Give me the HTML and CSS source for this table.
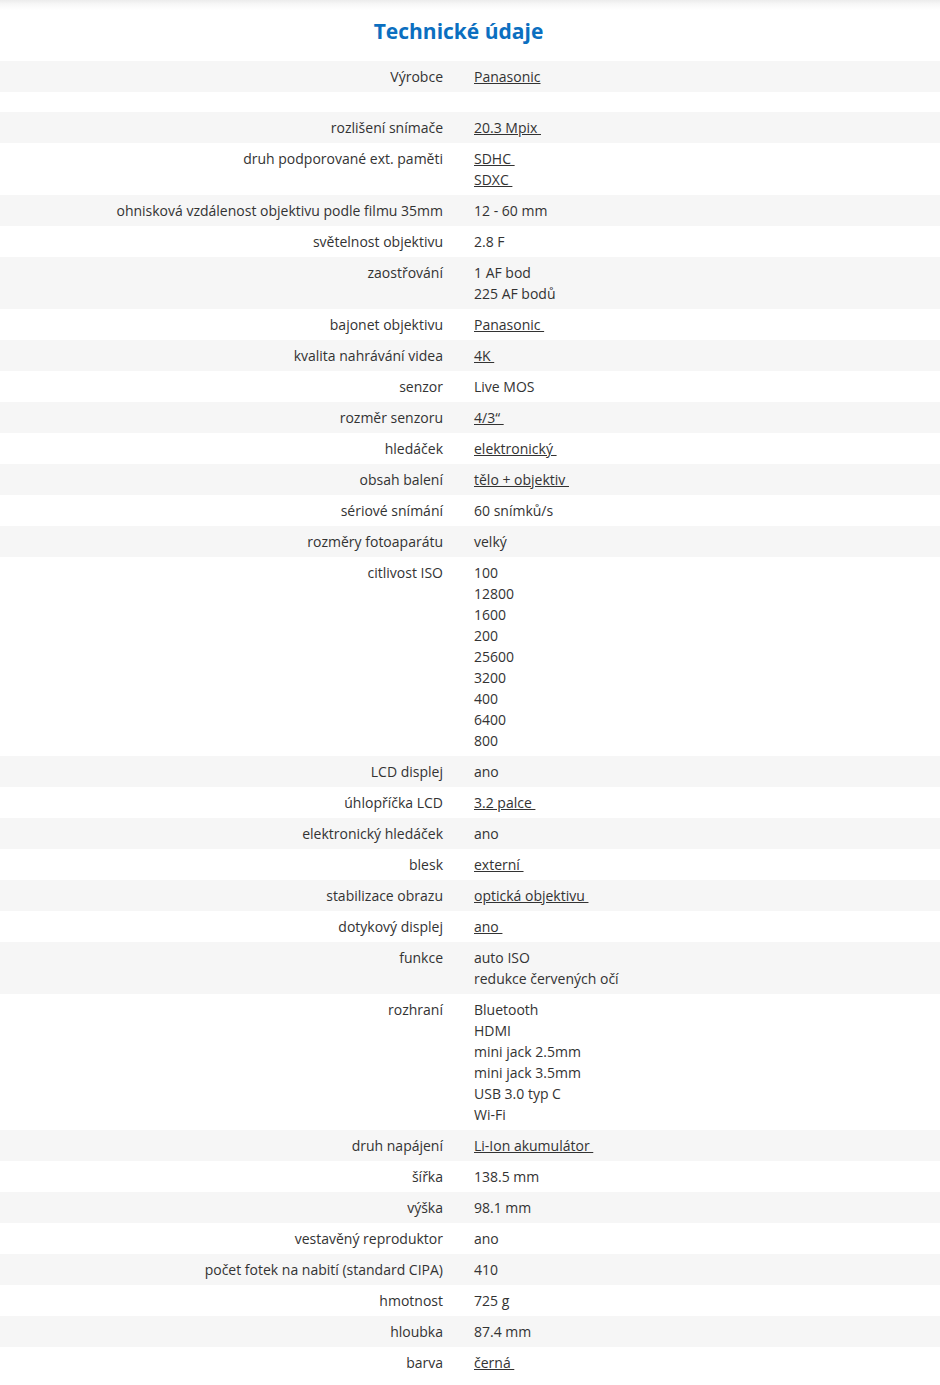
FILE: index.html
```html
<!DOCTYPE html>
<html lang="cs">
<head>
<meta charset="utf-8">
<title>Technické údaje</title>
<link rel="stylesheet" href="styles.css">
</head>
<body>
<div class="topshade"></div>
<section class="specs">
  <h2 class="specs-title">Technické údaje</h2>
  <div class="spec-table">
    <div class="row odd"><div class="lbl">Výrobce</div><div class="val"><a href="#">Panasonic</a></div></div>
    <div class="row spacer"></div>
    <div class="row odd"><div class="lbl">rozlišení snímače</div><div class="val"><a href="#">20.3 Mpix </a></div></div>
    <div class="row"><div class="lbl">druh podporované ext. paměti</div><div class="val"><a href="#">SDHC </a><br><a href="#">SDXC </a></div></div>
    <div class="row odd"><div class="lbl">ohnisková vzdálenost objektivu podle filmu 35mm</div><div class="val">12 - 60 mm</div></div>
    <div class="row"><div class="lbl">světelnost objektivu</div><div class="val">2.8 F</div></div>
    <div class="row odd"><div class="lbl">zaostřování</div><div class="val">1 AF bod<br>225 AF bodů</div></div>
    <div class="row"><div class="lbl">bajonet objektivu</div><div class="val"><a href="#">Panasonic </a></div></div>
    <div class="row odd"><div class="lbl">kvalita nahrávání videa</div><div class="val"><a href="#">4K </a></div></div>
    <div class="row"><div class="lbl">senzor</div><div class="val">Live MOS</div></div>
    <div class="row odd"><div class="lbl">rozměr senzoru</div><div class="val"><a href="#">4/3“ </a></div></div>
    <div class="row"><div class="lbl">hledáček</div><div class="val"><a href="#">elektronický </a></div></div>
    <div class="row odd"><div class="lbl">obsah balení</div><div class="val"><a href="#">tělo + objektiv </a></div></div>
    <div class="row"><div class="lbl">sériové snímání</div><div class="val">60 snímků/s</div></div>
    <div class="row odd"><div class="lbl">rozměry fotoaparátu</div><div class="val">velký</div></div>
    <div class="row"><div class="lbl">citlivost ISO</div><div class="val">100<br>12800<br>1600<br>200<br>25600<br>3200<br>400<br>6400<br>800</div></div>
    <div class="row odd"><div class="lbl">LCD displej</div><div class="val">ano</div></div>
    <div class="row"><div class="lbl">úhlopříčka LCD</div><div class="val"><a href="#">3.2 palce </a></div></div>
    <div class="row odd"><div class="lbl">elektronický hledáček</div><div class="val">ano</div></div>
    <div class="row"><div class="lbl">blesk</div><div class="val"><a href="#">externí </a></div></div>
    <div class="row odd"><div class="lbl">stabilizace obrazu</div><div class="val"><a href="#">optická objektivu </a></div></div>
    <div class="row"><div class="lbl">dotykový displej</div><div class="val"><a href="#">ano </a></div></div>
    <div class="row odd"><div class="lbl">funkce</div><div class="val">auto ISO<br>redukce červených očí</div></div>
    <div class="row"><div class="lbl">rozhraní</div><div class="val">Bluetooth<br>HDMI<br>mini jack 2.5mm<br>mini jack 3.5mm<br>USB 3.0 typ C<br>Wi-Fi</div></div>
    <div class="row odd"><div class="lbl">druh napájení</div><div class="val"><a href="#">Li-Ion akumulátor </a></div></div>
    <div class="row"><div class="lbl">šířka</div><div class="val">138.5 mm</div></div>
    <div class="row odd"><div class="lbl">výška</div><div class="val">98.1 mm</div></div>
    <div class="row"><div class="lbl">vestavěný reproduktor</div><div class="val">ano</div></div>
    <div class="row odd"><div class="lbl">počet fotek na nabití (standard CIPA)</div><div class="val">410</div></div>
    <div class="row"><div class="lbl">hmotnost</div><div class="val">725 g</div></div>
    <div class="row odd"><div class="lbl">hloubka</div><div class="val">87.4 mm</div></div>
    <div class="row"><div class="lbl">barva</div><div class="val"><a href="#">černá </a></div></div>
  </div>
</section>
</body>
</html>
```
FILE: styles.css
```css
html, body {
  margin: 0;
  padding: 0;
  background: #fff;
}
body {
  font-family: "Open Sans", "Noto Sans", sans-serif;
  font-size: 14px;
  line-height: 21px;
  color: #333;
}
.topshade {
  height: 10px;
  margin-bottom: -10px;
  background: linear-gradient(to bottom, #ececec 0%, #f7f7f7 40%, #ffffff 100%);
}
.specs-title {
  margin: 0;
  padding: 17px 23px 16px 0;
  text-align: center;
  font-size: 21px;
  line-height: 28px;
  font-weight: 700;
  color: #0b6fc0;
}
.spec-table {
  display: flex;
  flex-direction: column;
}
.row {
  display: grid;
  grid-template-columns: 458px 1fr;
  background: #fff;
}
.row.odd {
  background: #f6f6f6;
}
.row.spacer {
  height: 20px;
}
.lbl {
  padding: 5px 15px 5px 0;
  text-align: right;
}
.val {
  padding: 5px 0 5px 16px;
}
.val a {
  color: #333;
  text-decoration: underline;
  white-space: pre;
}
```
